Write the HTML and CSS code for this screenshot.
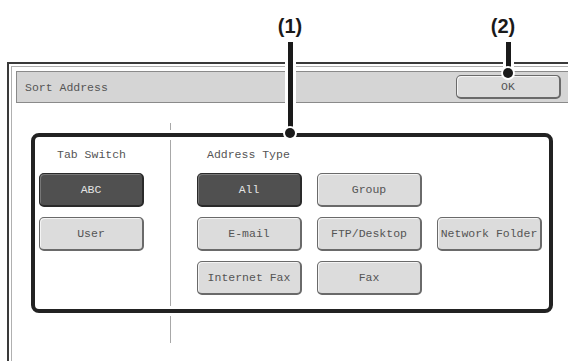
FILE: index.html
```html
<!doctype html>
<html>
<head>
    <title>Sort Address</title>
    <link rel="stylesheet" href="styles.css">
</head>
<body>
    <!-- callouts over the screen -->
    <div class="callout c1">
        <span class="num">(1)</span>
        <span class="stem"></span>
        <span class="dot"></span>
    </div>
    <div class="callout c2">
        <span class="num">(2)</span>
        <span class="stem"></span>
        <span class="dot"></span>
    </div>

    <div class="window">
        <div class="window-inner">
            <div class="titlebar">
                <span class="title">Sort Address</span>
                <button class="btn ok">OK</button>
            </div>
            <div class="pane">
                <div class="group">
                    <div class="col tabs">
                        <div class="label">Tab Switch</div>
                        <div class="stack">
                            <button class="btn on">ABC</button>
                            <button class="btn">User</button>
                        </div>
                    </div>
                    <div class="col types">
                        <div class="label">Address Type</div>
                        <div class="grid">
                            <button class="btn on">All</button>
                            <button class="btn">Group</button>
                            <span></span>
                            <button class="btn">E-mail</button>
                            <button class="btn">FTP/Desktop</button>
                            <button class="btn">Network Folder</button>
                            <button class="btn">Internet Fax</button>
                            <button class="btn">Fax</button>
                        </div>
                    </div>
                </div>
            </div>
        </div>
    </div>
</body>
</html>
```

FILE: styles.css
```css
* {
    box-sizing: border-box;
}

body {
    margin: 0;
    height: 361px;
    overflow: hidden;
    background: #fff;
    font: 11.5px "Liberation Mono", monospace;
    color: #555;
    position: relative;
}

/* callouts */
.callout .num {
    position: absolute;
    top: 15px;
    width: 40px;
    text-align: center;
    font: bold 20px/22px "Liberation Sans", Arial, sans-serif;
    color: #1a1a1a;
    z-index: 5;
}

.callout .stem {
    position: absolute;
    top: 42px;
    width: 5px;
    background: #1a1a1a;
    box-shadow: 0 0 0 3px #fff;
    z-index: 5;
}

.callout .dot {
    position: absolute;
    width: 10px;
    height: 10px;
    border-radius: 50%;
    background: #1a1a1a;
    box-shadow: 0 0 0 2px #fff;
    z-index: 6;
}

.c1 .num { left: 270px; }
.c1 .stem { left: 288px; height: 91px; }
.c1 .dot { left: 285px; top: 128px; }

.c2 .num { left: 483px; }
.c2 .stem { left: 506px; height: 31px; }
.c2 .dot { left: 503px; top: 68px; }

/* window */
.window {
    margin: 62px 0 0 7px;
    height: 299px;
    border-top: 2px solid #3a3a3a;
    border-left: 2px solid #3a3a3a;
    padding: 2px 0 0 2px;
}

.window-inner {
    height: 100%;
    border-top: 1px solid #b0b0b0;
    border-left: 1px solid #b0b0b0;
    padding: 4px 0 0 4px;
}

.titlebar {
    width: 556px;
    height: 32px;
    border: 1px solid #8a8a8a;
    background: #d5d5d5;
    display: flex;
    align-items: center;
    justify-content: space-between;
    padding: 0 10px 0 8px;
}

.btn {
    width: 105px;
    height: 34px;
    padding: 0;
    font: 11.5px "Liberation Mono", monospace;
    color: #555;
    background: #dcdcdc;
    border: 1px solid #6a6a6a;
    border-right-width: 2px;
    border-bottom-width: 2px;
    border-radius: 5px;
    box-shadow: inset 1px 1px 0 #f4f4f4;
    white-space: nowrap;
}

.btn.on {
    background: #505050;
    color: #e4e4e4;
    border-color: #2a2a2a;
    box-shadow: inset 1px 1px 0 #777;
}

.btn.ok {
    height: 24px;
}

.pane {
    position: relative;
    padding: 30px 0 0 15px;
}

/* vertical separator between the two columns */
.pane::before {
    content: "";
    position: absolute;
    left: 154px;
    top: 20px;
    width: 1px;
    height: 220px;
    background: #a8a8a8;
}

.group {
    position: relative;
    z-index: 1;
    width: 522px;
    height: 180px;
    border: 4px solid #222;
    border-radius: 8px;
    box-shadow: 0 0 0 3px #fff, inset 0 0 0 3px #fff;
    display: flex;
}

.col {
    padding-top: 11px;
}

.tabs {
    width: 136px;
    padding-left: 4px;
}

.types {
    padding-left: 26px;
}

.label {
    line-height: 14px;
    margin-bottom: 11px;
}

.tabs .label {
    width: 105px;
    text-align: center;
}

.types .label {
    padding-left: 10px;
}

.stack {
    display: flex;
    flex-direction: column;
    gap: 10px;
}

.grid {
    display: grid;
    grid-template-columns: repeat(3, 105px);
    grid-auto-rows: 34px;
    column-gap: 15px;
    row-gap: 10px;
}
```
